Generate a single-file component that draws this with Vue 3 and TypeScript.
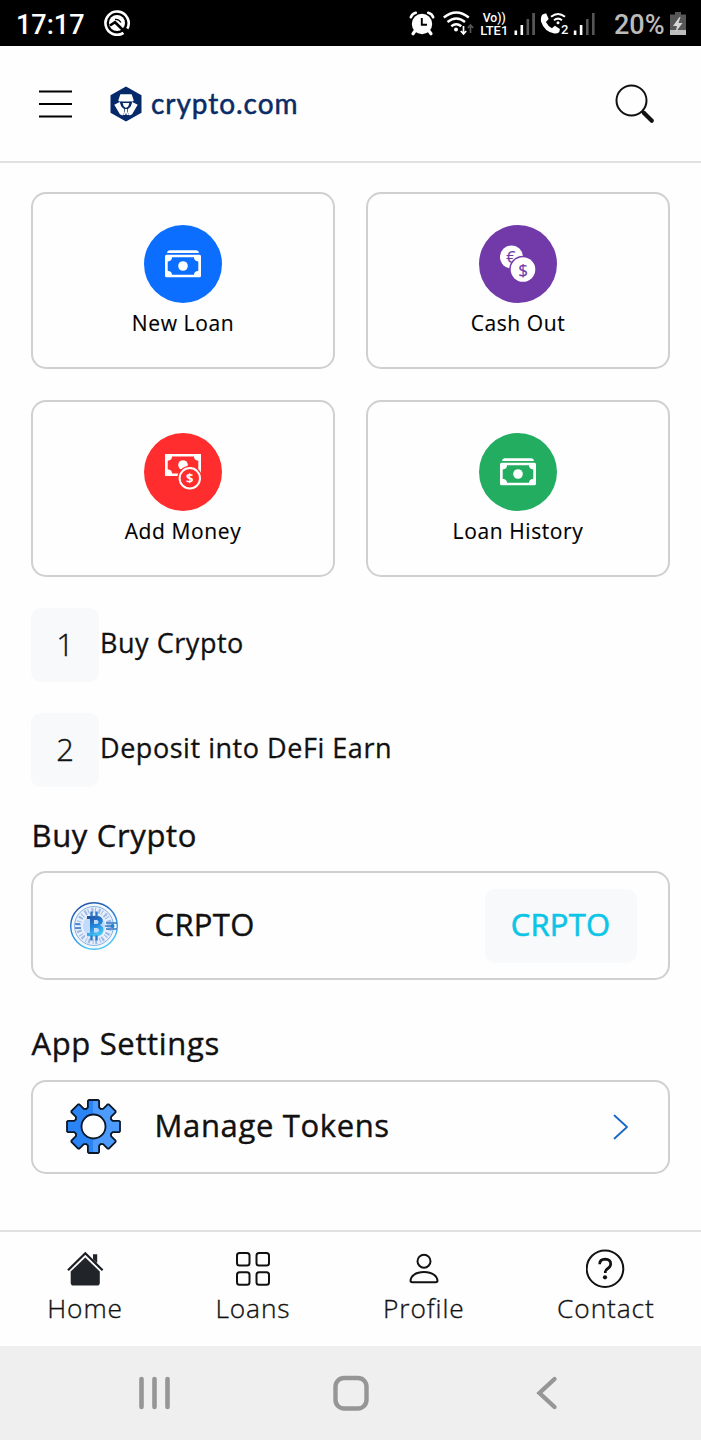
<script setup lang="ts">
interface Action { label: string; tone: string; icon: 'cash' | 'coins' | 'add' }
interface Tab { label: string; icon: 'home' | 'grid' | 'person' | 'help' }

const actions: Action[] = [
  { label: 'New Loan', tone: 'blue', icon: 'cash' },
  { label: 'Cash Out', tone: 'purple', icon: 'coins' },
  { label: 'Add Money', tone: 'red', icon: 'add' },
  { label: 'Loan History', tone: 'green', icon: 'cash' },
]
const steps: string[] = ['Buy Crypto', 'Deposit into DeFi Earn']
const tabs: Tab[] = [
  { label: 'Home', icon: 'home' },
  { label: 'Loans', icon: 'grid' },
  { label: 'Profile', icon: 'person' },
  { label: 'Contact', icon: 'help' },
]

// Outline of an eight-tooth gear centred on the origin.
function gearPath(): string {
  const pts: string[] = []
  for (let i = 0; i < 8; i++) {
    const a = (i * Math.PI) / 4
    const corners = [[-7.4, -17.4], [-5.6, -19.2], [-5.6, -25.6], [-4.8, -26.5], [4.8, -26.5], [5.6, -25.6], [5.6, -19.2], [7.4, -17.4]]
    for (const [x, y] of corners) {
      const px = x * Math.cos(a) - y * Math.sin(a)
      const py = x * Math.sin(a) + y * Math.cos(a)
      pts.push(`${px.toFixed(2)} ${py.toFixed(2)}`)
    }
  }
  return `M${pts.join('L')}Z`
}
const gear = gearPath()
</script>

<template>
  <div class="screen">
    <div class="status">
      <span class="clock">17:17</span>
      <svg class="app-dot" width="26" height="26" viewBox="0 0 26 26" fill="none" stroke="#fff">
        <path d="M19.500 22.800A11.600 11.600 0 1 1 23.300 18.600" stroke-width="2.600" />
        <circle cx="13" cy="13" r="8" fill="#fff" stroke="none" />
        <path d="M6 15.500l5-3.300L21 22" stroke="#000" stroke-width="2.600" />
        <path d="M11 9.500q3.500-.6 6 3" stroke="#000" stroke-width="1.300" />
      </svg>
      <span class="spacer"></span>
      <svg width="35" height="46" viewBox="405 0 35 46">
        <circle cx="422" cy="24" r="10.200" fill="#fff" />
        <path d="M410.800 17.200q1.500-3.600 5-4.400M433.200 17.200q-1.500-3.600-5-4.400" stroke="#fff" stroke-width="2.600" fill="none" stroke-linecap="round" />
        <path d="M415 31l-2 2.700M429 31l2 2.700" stroke="#fff" stroke-width="3.200" stroke-linecap="round" />
        <path d="M421.800 18v6.700h5.200" stroke="#000" stroke-width="1.900" fill="none" />
      </svg>
      <svg width="38" height="46" viewBox="440 0 38 46" fill="none" stroke="#fff">
        <path d="M443.800 17.500q12.500-10 25 0M447.500 22q8.800-7 17.500 0M451.300 26.200q5-3.800 10 0" stroke-width="2.500" />
        <circle cx="456" cy="29.600" r="2" fill="#fff" stroke="none" />
        <path d="M463.500 26v7.500M460.800 31l2.700 3 2.700-3" stroke-width="1.700" />
        <path d="M470.500 33v-7.500M467.800 28l2.700-3 2.700 3" stroke="#555" stroke-width="1.700" />
      </svg>
      <svg width="34" height="46" viewBox="478 0 34 46" fill="#fff" class="volte">
        <text x="482.700" y="21.500" font-size="12.500" textLength="23" lengthAdjust="spacingAndGlyphs">Vo))</text>
        <text x="480.300" y="35" font-size="12.800" textLength="28" lengthAdjust="spacingAndGlyphs">LTE1</text>
      </svg>
      <svg width="26" height="46" viewBox="512 0 26 46">
        <path d="M514.500 30.500h2.600v4.500h-2.600zM520.500 25h2.600v10h-2.600z" fill="#fff" />
        <path d="M526.500 19h2.600v16h-2.600zM532.200 13h2.800v22h-2.800z" fill="#555" />
      </svg>
      <svg width="34" height="46" viewBox="538 0 34 46">
        <path d="M542.500 14.500l3.600-1.200 2.600 5.700-2.800 2.900q2 4 6 6.300l3-2.500 5 3.300-.6 3q-1.500 1.800-5 1.600-10-1.800-13.300-12-.6-4.800 1.500-7.100z" fill="#fff" />
        <path d="M551 16.800q7-5.500 14 0M554 20.200q4-3.200 8 0" stroke="#fff" stroke-width="2" fill="none" />
        <circle cx="558" cy="22.700" r="1.500" fill="#fff" />
        <text x="561" y="34" font-size="13" fill="#fff" class="volte">2</text>
      </svg>
      <svg width="40" height="46" viewBox="572 0 40 46">
        <path d="M573.800 30.500h2.600v4.500h-2.600zM579.800 25h2.600v10h-2.600z" fill="#fff" />
        <path d="M586 19h2.600v16h-2.600zM592 13h2.600v22h-2.600z" fill="#555" />
      </svg>
      <span class="percent">20%</span>
      <svg width="33" height="46" viewBox="668 0 33 46">
        <path d="M675 12h6v2.500h5V30h-16V14.500h5z" fill="#575757" />
        <path d="M670 30h16v5h-16z" fill="#bdbdbd" />
        <path d="M679.500 17l-6.500 9h4l-1.500 6.500 7-9.500h-4l2-6z" fill="#d8d8d8" />
      </svg>
    </div>

    <header class="header">
      <svg class="menu" width="34" height="30" viewBox="0 0 34 30">
        <path d="M0 2.500h33M0 15h33M0 27.500h33" stroke="#000" stroke-width="2.200" />
      </svg>
      <svg class="badge" width="32" height="36" viewBox="0 0 32 36">
        <path d="M16 .5l15.500 8.800v17.400L16 35.500.5 26.700V9.300z" fill="#06296a" />
        <path d="M10.300 8.200h11.400l2 6.300q-.4 1-1.400 1H9.700q-1 0-1.400-1z" fill="#fff" />
        <path d="M4.300 18.800l5.400-2.800 1.600 4.600 3 2.600v3L12.500 29.500l-2.600-1.300zM27.700 18.800L22.300 16l-1.600 4.600-3 2.600v3l1.800 3.300 2.600-1.300z" fill="#fff" />
        <path d="M12 17h8l-1.400 4-1.600 1.200v3.300l2 3.500H13l2-3.500v-3.300L13.400 21z" fill="#fff" />
        <path d="M11.600 15.800l1.600 5 2 1.500h1.600l2-1.500 1.600-5" stroke="#06296a" stroke-width="1.200" fill="none" />
        <path d="M16 27.500v2.500" stroke="#06296a" stroke-width="1.200" />
      </svg>
      <span class="brand">crypto.com</span>
      <span class="spacer"></span>
      <svg class="search" width="40" height="40" viewBox="0 0 40 40" fill="none" stroke="#111">
        <circle cx="16.500" cy="16.500" r="15" stroke-width="2" />
        <path d="M27 27l3 3" stroke-width="3.400" />
        <path d="M29 29l7.800 7.800" stroke-width="4.200" stroke-linecap="round" />
      </svg>
    </header>

    <main class="main">
      <section class="actions">
        <div v-for="a in actions" :key="a.label" class="card action">
          <span class="disc" :class="a.tone">
            <svg v-if="a.icon === 'cash'" width="78" height="78" viewBox="0 0.500 78 78">
              <path d="M23 28.500q.3-2.700 2.500-2.700h27q2.200 0 2.500 2.700z" fill="#fff" />
              <path fill-rule="evenodd" d="M22.500 30.300h33q1.500 0 1.500 1.500v19.400q0 1.500-1.500 1.500h-33q-1.500 0-1.500-1.500V31.800q0-1.500 1.500-1.500zM28 32.800q0 3.800-4.300 4.200v9.200q4.300.4 4.300 4h22q0-3.600 4.300-4V37q-4.300-.4-4.300-4.200z" fill="#fff" />
              <circle cx="39" cy="41.500" r="4.800" fill="#fff" />
            </svg>
            <svg v-else-if="a.icon === 'coins'" width="78" height="78" viewBox="0 0.500 78 78">
              <circle cx="32.500" cy="32.500" r="11.500" fill="#fff" />
              <text x="31.800" y="38.300" font-size="16" class="money purple-ink">€</text>
              <circle cx="44" cy="45" r="13.800" fill="#7239a8" />
              <circle cx="44" cy="45" r="12.300" fill="#fff" />
              <text x="44" y="51" font-size="17" class="money purple-ink">$</text>
            </svg>
            <svg v-else width="78" height="78" viewBox="0 0.500 78 78">
              <path fill-rule="evenodd" d="M21 21.500h36v22H21zM28 24q0 3.800-4.300 4.200v8.600q4.300.4 4.300 4.200h22q0-3.800 4.300-4.200v-8.600q-4.300-.4-4.300-4.200z" fill="#fff" />
              <circle cx="39" cy="32.500" r="4.800" fill="#fff" />
              <circle cx="45.800" cy="45.800" r="12.500" fill="#ff2d2d" />
              <circle cx="45.800" cy="45.800" r="10.200" fill="none" stroke="#fff" stroke-width="2" />
              <text x="45.800" y="50.500" font-size="13" font-weight="700" class="money" fill="#fff">$</text>
            </svg>
          </span>
          <span class="action-label">{{ a.label }}</span>
        </div>
      </section>

      <section class="steps">
        <div v-for="(s, i) in steps" :key="s" class="step">
          <span class="num">{{ i + 1 }}</span>
          <span class="step-label">{{ s }}</span>
        </div>
      </section>

      <h2 class="title">Buy Crypto</h2>
      <div class="card row crypto">
        <svg class="row-icon" width="56" height="56" viewBox="-28 -28 56 56">
          <defs>
            <linearGradient id="coin" x1="0" y1="0" x2="0.400" y2="1">
              <stop offset="0" stop-color="#24499e" />
              <stop offset=".6" stop-color="#2389dd" />
              <stop offset="1" stop-color="#45c3f2" />
            </linearGradient>
          </defs>
          <circle r="23.300" fill="#f3f8fe" stroke="url(#coin)" stroke-width="1.400" />
          <circle r="19.500" fill="#e6effb" stroke="#88afe0" stroke-width="1" />
          <circle r="15.500" fill="none" stroke="#9db9e6" stroke-width="5" stroke-dasharray="2 1.500 1 2.500" />
          <circle r="11" fill="#b9d6fa" opacity=".8" />
          <path d="M12-3h11M11 0h6M12 3h11M-19-2h5M-19 2h6" stroke="#3678c4" stroke-width="1.300" />
          <circle cx="18.500" cy="0" r="2" fill="#257fcd" />
          <path d="M-7-10H3.500q5.500.5 5.300 5.500-.4 2.800-3 3.600 4 1 3.600 5.500-.7 5.200-6 5.600H-7V7h3v-14h-3zM0-6v4h2.500q2-.2 2-2t-2-2zM0 2v4.500h3q2-.3 2-2.300T3 2z" fill="url(#coin)" fill-rule="evenodd" />
          <path d="M-2.500-14.500v5.500M2.500-14.500v5.500M-2.500 9.500v5M2.500 9.500v5" stroke="#2876c8" stroke-width="2.300" />
        </svg>
        <span class="row-label narrow">CRPTO</span>
        <span class="spacer"></span>
        <button class="pill" type="button">CRPTO</button>
      </div>

      <h2 class="title second">App Settings</h2>
      <div class="card row settings">
        <svg class="row-icon" width="56" height="56" viewBox="-27.500 -27.500 56 56">
          <defs>
            <linearGradient id="steel" x1="0" x2="1" y1="0" y2="0">
              <stop offset=".5" stop-color="#2b84f6" />
              <stop offset=".5" stop-color="#4c9bfd" />
            </linearGradient>
          </defs>
          <path :d="gear" fill="url(#steel)" stroke="#0a1726" stroke-width="1.800" stroke-linejoin="round" />
          <circle r="12" fill="#fff" stroke="#0a1726" stroke-width="1.800" />
        </svg>
        <span class="row-label">Manage Tokens</span>
        <span class="spacer"></span>
        <svg class="chevron" width="16" height="26" viewBox="0 0 16 26">
          <path d="M1.500 1.500L14 13 1.500 24.500" fill="none" stroke="#1767c4" stroke-width="1.800" stroke-linecap="round" stroke-linejoin="round" />
        </svg>
      </div>
    </main>

    <nav class="tabs">
      <div v-for="t in tabs" :key="t.label" class="tab">
        <svg v-if="t.icon === 'home'" width="40" height="40" viewBox="65 1249 40 40">
          <path d="M93 1254.300h4.200v9l-4.200-4z" fill="#212529" />
          <path d="M68 1270.200l17.300-16.900 17.300 16.900" fill="none" stroke="#1b1f23" stroke-width="2.300" />
          <path d="M85.300 1257.500l14.500 14v11.200q0 2.800-2.800 2.800H73.500q-2.800 0-2.800-2.800v-11.200z" fill="#212529" />
        </svg>
        <svg v-else-if="t.icon === 'grid'" width="40" height="40" viewBox="233 1249 40 40" fill="none" stroke="#111" stroke-width="2">
          <rect x="237" y="1253" width="12.500" height="12.500" rx="2.500" />
          <rect x="256.500" y="1253" width="12.500" height="12.500" rx="2.500" />
          <rect x="237" y="1272.300" width="12.500" height="12.500" rx="2.500" />
          <rect x="256.500" y="1272.300" width="12.500" height="12.500" rx="2.500" />
        </svg>
        <svg v-else-if="t.icon === 'person'" width="40" height="40" viewBox="403.500 1249 40 40" fill="none" stroke="#111" stroke-width="2">
          <circle cx="423.500" cy="1261.200" r="6.500" />
          <path d="M410 1280.500q.3-3.500 3.500-5.800 3.700-2.700 10-2.700t10 2.700q3.200 2.300 3.500 5.800 0 1.800-1.800 1.800h-23.400q-1.800 0-1.800-1.800z" />
        </svg>
        <svg v-else width="40" height="40" viewBox="586 1249 40 40" fill="none" stroke="#111">
          <circle cx="605" cy="1268.700" r="18.300" stroke-width="2" />
          <path d="M599.600 1264.300q.2-5.100 5.600-5.100 5.500.2 5.500 4.800 0 2.600-2.900 4.500-2.500 1.700-2.500 3.300v1.200" stroke-width="2.700" />
          <circle cx="605" cy="1277.300" r="2.100" fill="#111" stroke="none" />
        </svg>
        <span class="tab-label">{{ t.label }}</span>
      </div>
    </nav>

    <div class="system">
      <svg width="34" height="34" viewBox="0 0 34 34">
        <path d="M3.500 3v28M16.500 3v28M29.500 3v28" stroke="#969696" stroke-width="4.600" stroke-linecap="round" />
      </svg>
      <svg class="home-key" width="36" height="36" viewBox="0 0 36 36">
        <rect x="2.500" y="3" width="31" height="30.500" rx="8.500" fill="none" stroke="#969696" stroke-width="4.400" />
      </svg>
      <svg width="22" height="36" viewBox="0 0 22 36">
        <path d="M18.500 4L3.500 18l15 14" fill="none" stroke="#969696" stroke-width="4.400" stroke-linecap="round" />
      </svg>
    </div>
  </div>
</template>

<style>
body { margin: 0; background: #fff; }
</style>

<style scoped>
.screen {
  width: 701px;
  height: 1440px;
  display: flex;
  flex-direction: column;
  overflow: hidden;
  background: #fefefe;
  color: #111;
  font-family: "Open Sans", "Noto Sans", sans-serif;
}
.screen * { box-sizing: border-box; }
.spacer { flex: 1; }
svg { display: block; flex: none; }
.status {
  flex: none;
  height: 46px;
  background: #000;
  display: flex;
  align-items: center;
  color: #fff;
  font-family: Roboto, sans-serif;
}
.clock {
  margin-left: 16px;
  width: 88px;
  font-size: 27px;
  font-weight: 500;
  letter-spacing: 0;
  line-height: 46px;
  padding-top: 3px;
}
.volte { font-family: Roboto, sans-serif; font-weight: 500; }
.percent {
  width: 56px;
  padding: 3px 0 0 2px;
  color: #bbb;
  font-size: 27px;
  font-weight: 500;
}
.header {
  flex: none;
  height: 117px;
  border-bottom: 2px solid #e0e1e2;
  display: flex;
  align-items: center;
  padding: 0 46px 0 39px;
}
.badge { margin-left: 37px; }
.brand {
  margin-left: 9px;
  color: #0a2b66;
  font-family: Lato, sans-serif;
  font-size: 28px;
  font-weight: 400;
  -webkit-text-stroke: 0.5px #0a2b66;
  letter-spacing: 0.95px;
  line-height: 36px;
  padding-bottom: 2px;
}
.main { flex: none; height: 1067px; padding: 29px 31px 0; }
.card { border: 2px solid #d0d0d0; border-radius: 15px; background: #fefefe; }
.actions { display: grid; grid-template-columns: 304px 304px; gap: 31px; }
.action {
  height: 177px;
  padding-top: 30.5px;
  display: flex;
  flex-direction: column;
  align-items: center;
}
.disc { width: 78px; height: 78px; border-radius: 50%; }
.blue { background: #0b6eff; }
.purple { background: #7239a8; }
.red { background: #ff2d2d; }
.green { background: #22ad60; }
.money { text-anchor: middle; font-family: "Open Sans", sans-serif; }
.purple-ink { fill: #7239a8; stroke: #7239a8; stroke-width: 0.2px; }
.action-label {
  margin-top: 5.5px;
  font-size: 21px;
  line-height: 30px;
  font-weight: 400;
  -webkit-text-stroke: 0.15px #000;
  letter-spacing: 0.6px;
  color: #000;
}
.steps { display: grid; gap: 31px; margin-top: 31px; }
.step { height: 74px; display: flex; align-items: center; gap: 1px; }
.num {
  width: 68px;
  height: 74px;
  border-radius: 10px;
  background: #f8f9fb;
  font-size: 31px;
  font-weight: 300;
  -webkit-text-stroke: 0.4px #111;
  line-height: 72px;
  text-align: center;
}
.step-label {
  font-size: 27px;
  font-weight: 400;
  -webkit-text-stroke: 0.3px #111;
  letter-spacing: 0.54px;
  line-height: 36px;
  padding-bottom: 5px;
}
.title {
  margin: 26px 0 0 0.5px;
  font-size: 31px;
  line-height: 44px;
  font-weight: 400;
  -webkit-text-stroke: 0.4px #111;
  letter-spacing: 0.65px;
}
.row { display: flex; align-items: center; padding: 0 31px 0 33px; }
.crypto { height: 109px; margin-top: 14px; }
.second { margin-top: 41px; }
.settings { height: 94px; margin-top: 15px; padding-right: 39px; }
.row-label {
  margin-left: 32.5px;
  font-size: 31px;
  font-weight: 400;
  -webkit-text-stroke: 0.4px #111;
  letter-spacing: 0.65px;
  line-height: 44px;
  padding-bottom: 4px;
}
.narrow { letter-spacing: 0.35px; }
.pill {
  width: 152px;
  height: 74px;
  border: 0;
  border-radius: 10px;
  background: #f8f9fb;
  color: #0cc5e6;
  font: 400 31px/44px "Open Sans", "Noto Sans", sans-serif;
  -webkit-text-stroke: 0.6px #0cc5e6;
  letter-spacing: 0.25px;
  padding: 0 1px 4px 0;
}
.tabs {
  flex: none;
  height: 116px;
  border-top: 2px solid #e0e1e2;
  display: flex;
  justify-content: space-around;
  padding: 17px 0 0 1px;
}
.tab { display: flex; flex-direction: column; align-items: center; }
.tab-label {
  font-size: 26.3px;
  font-weight: 300;
  -webkit-text-stroke: 0.35px #111;
  line-height: 36px;
  margin-top: 1px;
  letter-spacing: 0.9px;
}
.system {
  flex: none;
  height: 94px;
  background: #efefef;
  display: flex;
  align-items: center;
  justify-content: space-between;
  padding: 0 143px 0 138px;
}
.home-key { margin-right: 7px; }
</style>
